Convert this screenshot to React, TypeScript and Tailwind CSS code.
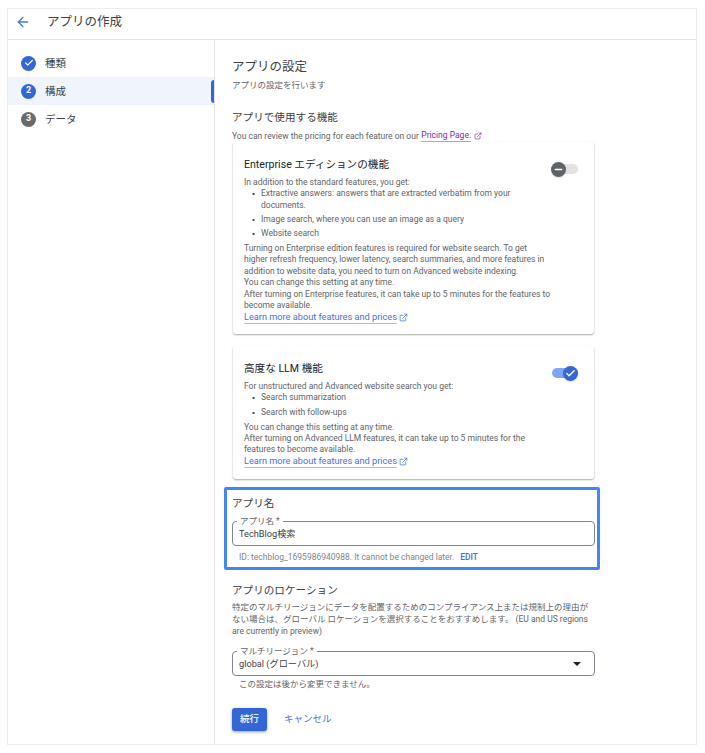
import { ArrowLeft, Check, ExternalLink, Minus } from "lucide-react";

const font = "font-['Roboto','Noto_Sans_CJK_JP',sans-serif]";

const steps = [
	{ label: "種類", mark: "check", active: false },
	{ label: "構成", mark: "2", active: true },
	{ label: "データ", mark: "3", active: false },
];

const LearnMore = ({ className = "" }: { className?: string }) => (
	<div className={`flex items-center gap-[2px] h-[13px] ${className}`}>
		<a className="text-[#4a6fd8] text-[9.2px] leading-[12px] border-b border-[#a9bcec]">
			Learn more about features and prices
		</a>
		<ExternalLink size={9} className="text-[#4a6fd8]" />
	</div>
);

const Bullet = ({ children }: { children: React.ReactNode }) => (
	<li className="flex pl-[6px] mb-[2.6px]">
		<span className="w-[11px] shrink-0 text-[#444] text-[7px] leading-[12px]">▪</span>
		<span>{children}</span>
	</li>
);

const Sidebar = () => (
	<aside className="w-[207px] shrink-0 border-r border-[#e3e3e3] pt-[9px]">
		{steps.map((step) => (
			<div
				key={step.label}
				className={`relative h-[28px] flex items-center pl-[13px] gap-[9px] text-[10.5px] text-[#3c4043] ${
					step.active ? "bg-[#eff4fd]" : ""
				}`}
			>
				<span
					className={`w-[15px] h-[15px] rounded-full flex items-center justify-center text-white text-[9px] font-bold ${
						step.mark === "3" ? "bg-[#6b6b6b]" : "bg-[#3367d6]"
					}`}
				>
					{step.mark === "check" ? <Check size={10} strokeWidth={3} /> : step.mark}
				</span>
				<span className="mt-[1px]">{step.label}</span>
				{step.active && (
					<span className="absolute right-0 top-[3px] w-[3px] h-[23px] rounded-l-sm bg-[#3367d6]" />
				)}
			</div>
		))}
	</aside>
);

export default function App() {
	return (
		<div className={`${font} w-[705px] h-[753px] bg-white pt-[8px] pb-[8px] pl-[7px] pr-[8px]`}>
			<div className="h-full flex flex-col border border-[#ececec]">
				<header className="h-[31px] shrink-0 flex items-center pl-[7px] pb-[4px] gap-[16px] border-b border-[#e3e3e3]">
					<ArrowLeft size={16} className="text-[#4a78dc]" />
					<h1 className="text-[12.5px] text-[#3c4043]">アプリの作成</h1>
				</header>
				<div className="flex-1 flex min-h-0">
					<Sidebar />
					<main className="flex-1 pl-[9px] pt-[18px] text-[#5f6368]">
						<div className="pl-[8px] w-[370px]">
							<h2 className="text-[12.5px] leading-[18px] text-[#3c4043]">アプリの設定</h2>
							<p className="text-[8.5px] leading-[12px] mt-[3px]">アプリの設定を行います</p>
							<h2 className="text-[10.6px] leading-[16px] text-[#3c4043] mt-[19px]">アプリで使用する機能</h2>
							<p className="text-[8.5px] leading-[12px] mt-[3px] flex items-center gap-[2.5px]">
								You can review the pricing for each feature on our
								<a className="text-[#8e24aa] border-b border-[#c79bd6]">Pricing Page.</a>
								<ExternalLink size={8} className="text-[#8e24aa]" />
							</p>

							<section className="relative w-[361px] ml-[1px] h-[192px] rounded-[3px] bg-white shadow-[0_1px_2px_rgba(0,0,0,0.35)] pl-[11px] pr-[40px] pt-[15px] text-[8.5px] leading-[11.4px]">
								<h3 className="text-[10.6px] leading-[16px] text-[#202124] mb-[4px]">Enterprise エディションの機能</h3>
								<p>In addition to the standard features, you get:</p>
								<ul>
									<Bullet>
										Extractive answers: answers that are extracted verbatim from your
										<br />
										documents.
									</Bullet>
									<Bullet>Image search, where you can use an image as a query</Bullet>
									<Bullet>Website search</Bullet>
								</ul>
								<p>
									Turning on Enterprise edition features is required for website search. To get
									<br />
									higher refresh frequency, lower latency, search summaries, and more features in
									<br />
									addition to website data, you need to turn on Advanced website indexing.
									<br />
									You can change this setting at any time.
									<br />
									After turning on Enterprise features, it can take up to 5 minutes for the features to
									<br />
									become available.
								</p>
								<LearnMore />
								<div className="absolute right-[16px] top-[22px] w-[26px] h-[10px] rounded-full bg-[#e3e3e3]">
									<span className="absolute -left-[1px] -top-[2px] w-[15px] h-[15px] rounded-full bg-[#5f6368] flex items-center justify-center shadow-sm">
										<Minus size={11} strokeWidth={3} className="text-white" />
									</span>
								</div>
							</section>

							<section className="relative w-[361px] ml-[1px] mt-[12px] h-[133px] rounded-[3px] bg-white shadow-[0_1px_2px_rgba(0,0,0,0.35)] pl-[11px] pr-[40px] pt-[15px] text-[8.5px] leading-[11.4px]">
								<h3 className="text-[10.6px] leading-[16px] text-[#202124] mb-[4px]">高度な LLM 機能</h3>
								<p>For unstructured and Advanced website search you get:</p>
								<ul>
									<Bullet>Search summarization</Bullet>
									<Bullet>Search with follow-ups</Bullet>
								</ul>
								<p>
									You can change this setting at any time.
									<br />
									After turning on Advanced LLM features, it can take up to 5 minutes for the
									<br />
									features to become available.
								</p>
								<LearnMore className="-mt-[1px]" />
								<div className="absolute right-[16px] top-[22px] w-[26px] h-[10px] rounded-full bg-[#7ea6f4]">
									<span className="absolute right-0 -top-[2px] w-[15px] h-[15px] rounded-full bg-[#3367d6] flex items-center justify-center shadow-sm">
										<Check size={11} strokeWidth={3} className="text-white" />
									</span>
								</div>
							</section>
						</div>

						<div className="w-[376px] h-[83px] mt-[8px] border-[3px] border-[#4285f4] rounded-[2px] pl-[5px] pt-[6px]">
							<h2 className="text-[10.6px] leading-[16px] text-[#3c4043]">アプリ名</h2>
							<div className="relative w-[363px] h-[25px] mt-[9px] border border-[#80868b] rounded-[4px] pl-[6px] flex items-center text-[9.2px] text-[#3c4043]">
								<span className="absolute left-[4px] -top-[7px] px-[3px] bg-white text-[8.5px] leading-[12px] text-[#5f6368]">
									アプリ名 *
								</span>
								TechBlog検索
							</div>
							<p className="text-[8.5px] leading-[12px] mt-[5px] pl-[7px] text-[#80868b]">
								ID: techblog_1695986940988. It cannot be changed later.
								<span className="ml-[6px] text-[#3f6fd8] font-medium">EDIT</span>
							</p>
						</div>

						<div className="pl-[8px] w-[372px]">
							<h2 className="text-[10.6px] leading-[16px] text-[#3c4043] mt-[13px]">アプリのロケーション</h2>
							<p className="text-[8.5px] leading-[12px] mt-[2px]">
								特定のマルチリージョンにデータを配置するためのコンプライアンス上または規制上の理由が
								<br />
								ない場合は、グローバル ロケーションを選択することをおすすめします。 (EU and US regions
								<br />
								are currently in preview)
							</p>
							<div className="relative w-[363px] h-[25px] mt-[14px] border border-[#80868b] rounded-[4px] pl-[6px] flex items-center justify-between text-[9.2px] text-[#3c4043]">
								<span className="absolute left-[4px] -top-[7px] px-[3px] bg-white text-[8.5px] leading-[12px] text-[#5f6368]">
									マルチリージョン *
								</span>
								global (グローバル)
								<span className="mr-[13px] w-0 h-0 border-x-[4px] border-x-transparent border-t-[4px] border-t-[#202124]" />
							</div>
							<p className="text-[8.5px] leading-[12px] mt-[2px] pl-[7px]">この設定は後から変更できません。</p>
							<div className="flex items-center gap-[17px] mt-[18px]">
								<button className="w-[35px] h-[23px] rounded-[3px] bg-[#3367d6] text-white text-[9.5px] font-medium shadow-[0_1px_3px_rgba(0,0,0,0.4)]">
									続行
								</button>
								<a className="text-[#4a78dc] text-[9.5px]">キャンセル</a>
							</div>
						</div>
					</main>
				</div>
			</div>
		</div>
	);
}
